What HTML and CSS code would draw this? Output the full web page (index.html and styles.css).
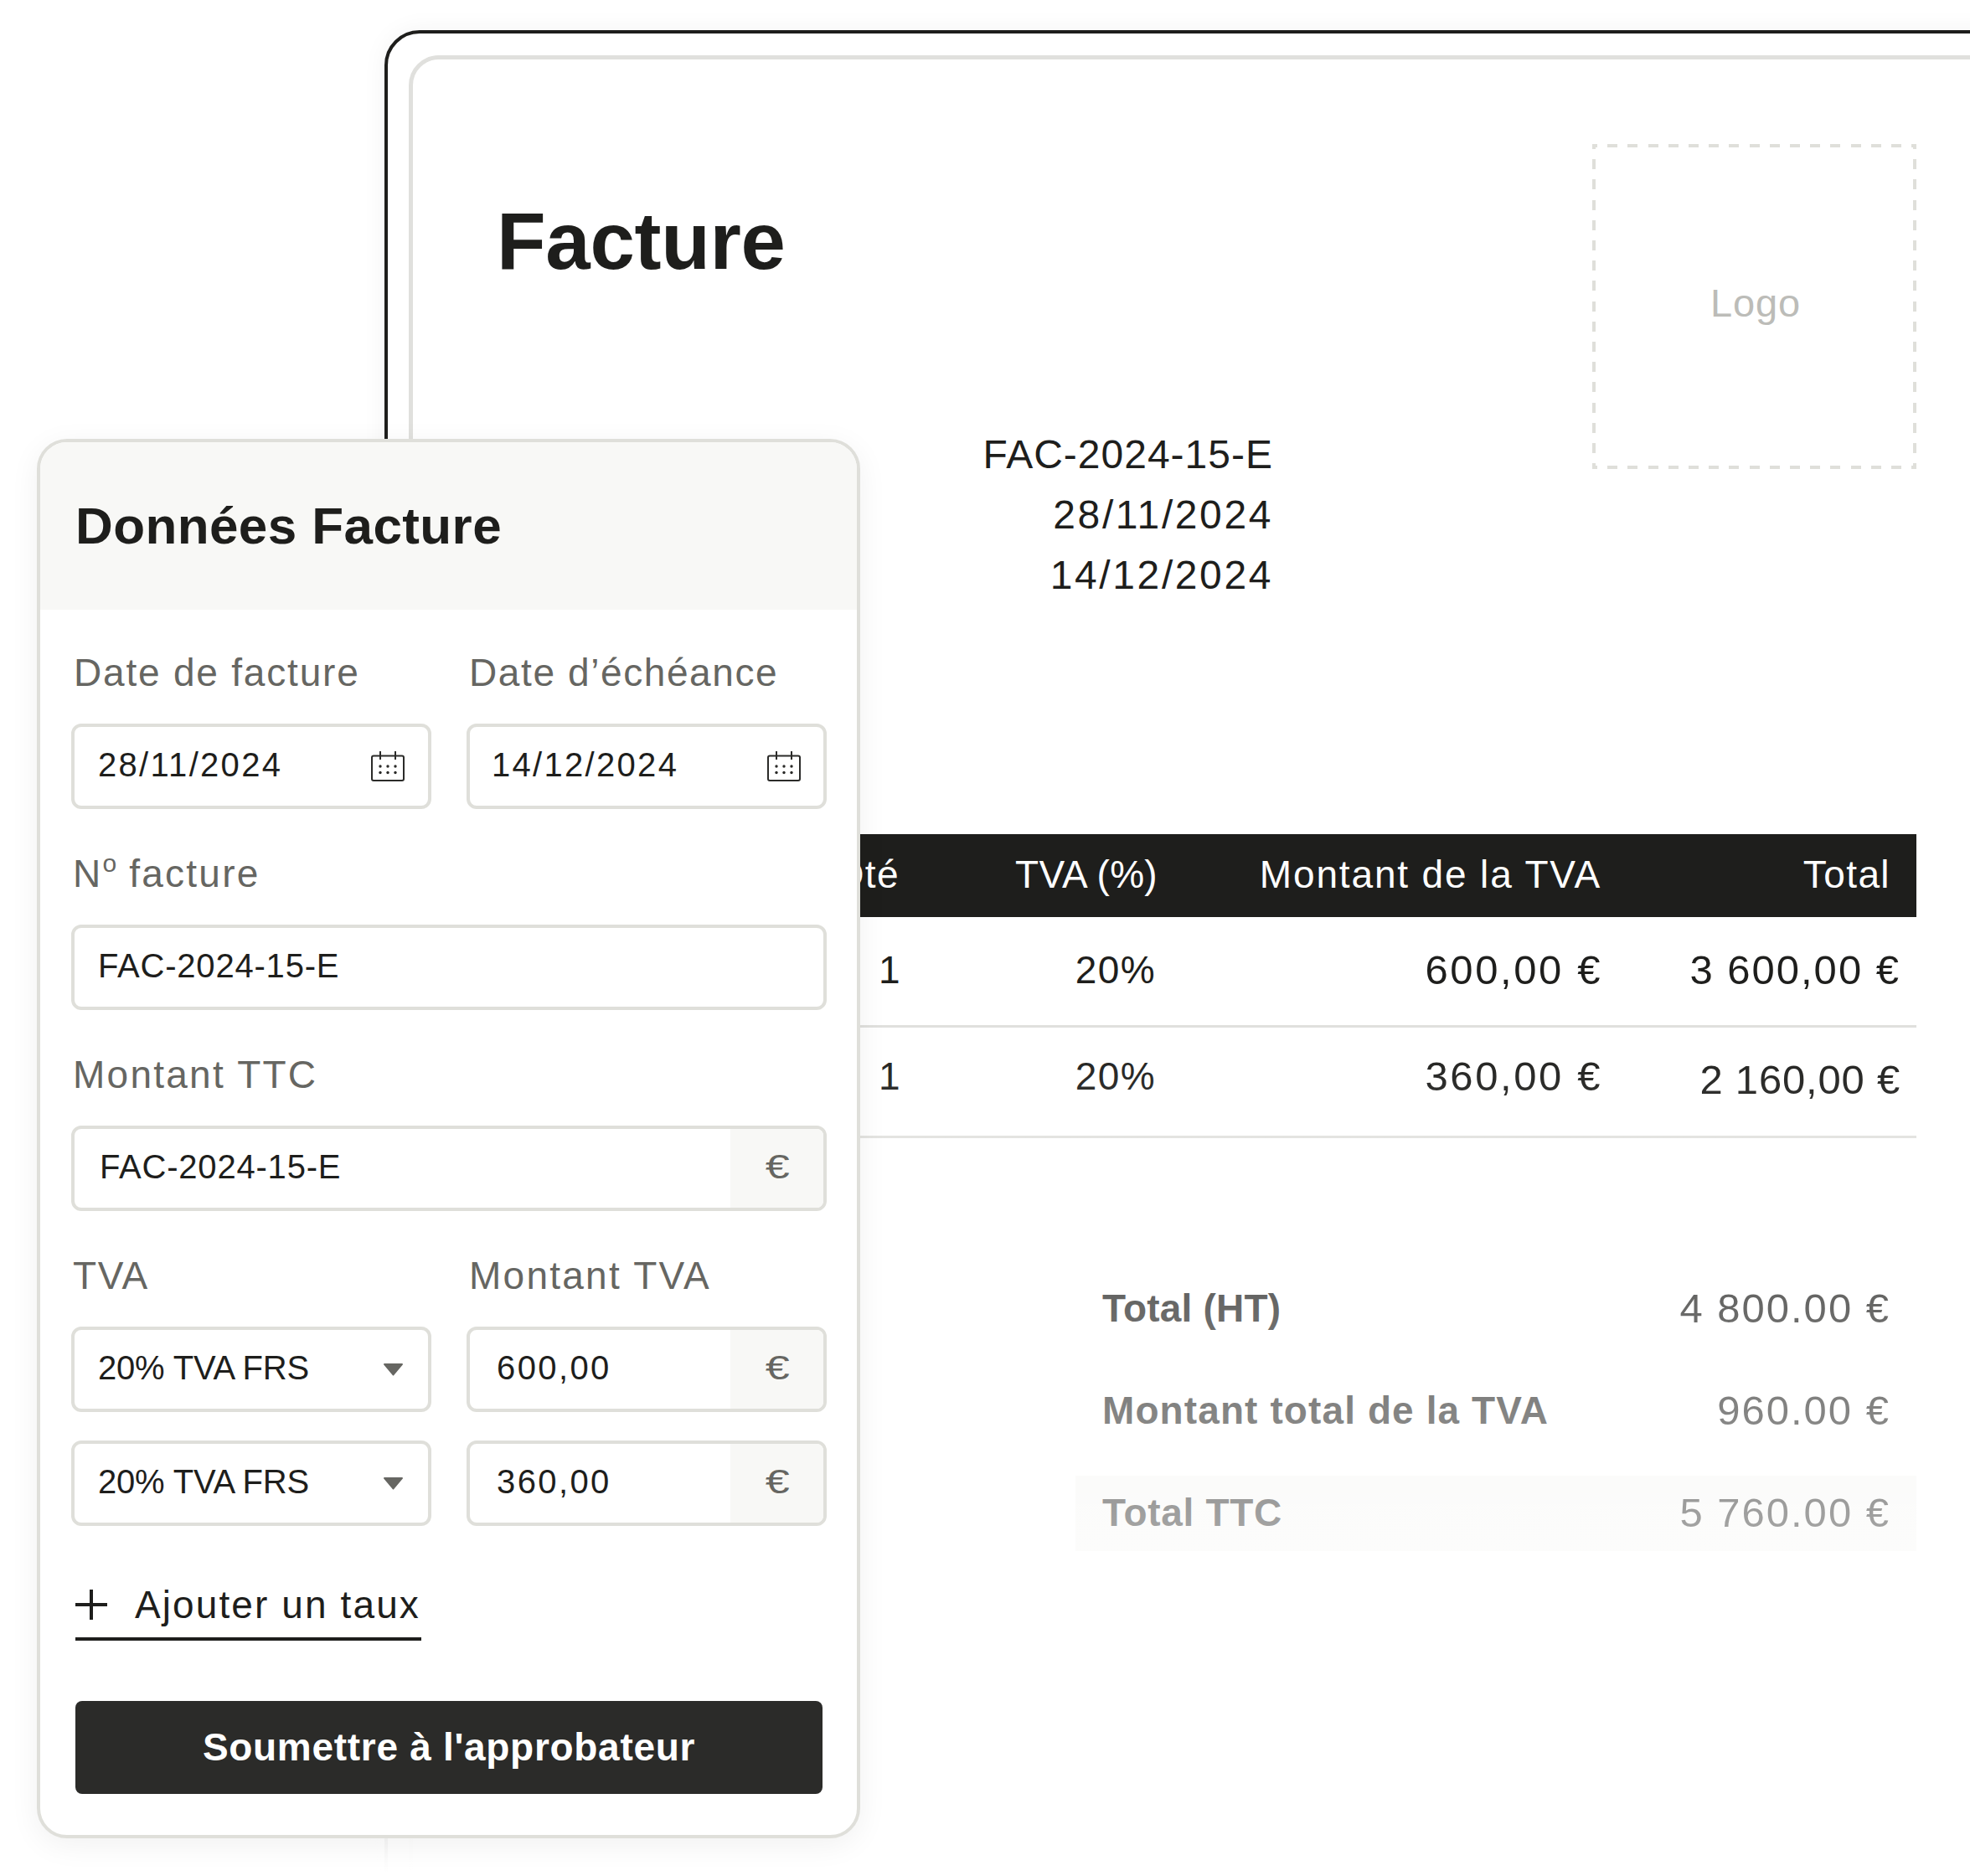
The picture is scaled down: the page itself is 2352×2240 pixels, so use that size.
FILE: index.html
```html
<!DOCTYPE html>
<html lang="fr">
<head>
<meta charset="utf-8">
<title>Facture</title>
<link rel="stylesheet" href="styles.css">
</head>
<body>
<div class="stage">
  <div class="frame">
    <div class="sheet">
      <header class="sheet-head">
        <div class="sheet-title">
          <h1 class="doc-title">Facture</h1>
          <div class="meta">
            <div class="meta-code">FAC-2024-15-E</div>
            <div>28/11/2024</div>
            <div>14/12/2024</div>
          </div>
        </div>
        <div class="logo-box">Logo</div>
      </header>

      <div class="table">
        <div class="thead">
          <span>Qté</span><span class="h-tva">TVA (%)</span><span class="h-amount">Montant de la TVA</span><span>Total</span>
        </div>
        <div class="trow">
          <span>1</span><span class="pct">20%</span><span class="money money-short">600,00 €</span><span class="money">3 600,00 €</span>
        </div>
        <div class="trow trow-second">
          <span>1</span><span class="pct">20%</span><span class="money money-short">360,00 €</span><span class="money low">2 160,00 €</span>
        </div>
      </div>

      <div class="totals">
        <div class="total-row"><strong>Total (HT)</strong><span class="money">4 800.00 €</span></div>
        <div class="total-row"><strong class="wide">Montant total de la TVA</strong><span class="money">960.00 €</span></div>
        <div class="total-row total-ttc"><strong class="mid">Total TTC</strong><span class="money">5 760.00 €</span></div>
      </div>
    </div>
  </div>

  <div class="fade"></div>

  <section class="card">
    <div class="card-head"><h2>Données Facture</h2></div>
    <div class="card-body">
      <div class="two">
        <div class="field">
          <label class="label label-date">Date de facture</label>
          <div class="input"><span class="value value-date">28/11/2024</span>
            <svg class="cal" viewBox="0 0 40 36" fill="none" stroke="#2b2b29" stroke-width="2"><rect x="1" y="5.5" width="38" height="29.5" rx="2"/><path d="M11 0v10M29 0v10"/><g fill="#2b2b29" stroke="none"><circle cx="11" cy="18" r="1.7"/><circle cx="20" cy="18" r="1.7"/><circle cx="29" cy="18" r="1.7"/><circle cx="11" cy="25.5" r="1.7"/><circle cx="20" cy="25.5" r="1.7"/><circle cx="29" cy="25.5" r="1.7"/></g></svg>
          </div>
        </div>
        <div class="field">
          <label class="label label-col2">Date d’échéance</label>
          <div class="input"><span class="value value-date value-date2">14/12/2024</span>
            <svg class="cal" viewBox="0 0 40 36" fill="none" stroke="#2b2b29" stroke-width="2"><rect x="1" y="5.5" width="38" height="29.5" rx="2"/><path d="M11 0v10M29 0v10"/><g fill="#2b2b29" stroke="none"><circle cx="11" cy="18" r="1.7"/><circle cx="20" cy="18" r="1.7"/><circle cx="29" cy="18" r="1.7"/><circle cx="11" cy="25.5" r="1.7"/><circle cx="20" cy="25.5" r="1.7"/><circle cx="29" cy="25.5" r="1.7"/></g></svg>
          </div>
        </div>
      </div>

      <div class="field">
        <label class="label label-wide">N<sup class="deg">o</sup> facture</label>
        <div class="input"><span class="value value-code">FAC-2024-15-E</span></div>
      </div>

      <div class="field">
        <label class="label label-wide">Montant TTC</label>
        <div class="input input-addon"><span class="value value-code">FAC-2024-15-E</span><span class="addon"><span class="euro">€</span></span></div>
      </div>

      <div class="two two-tight">
        <div class="field">
          <label class="label">TVA</label>
          <div class="input"><span class="value value-select">20% TVA FRS</span><svg class="caret" viewBox="0 0 25 16"><path d="M2 1h21a1 1 0 0 1 .8 1.6L13.3 15a1 1 0 0 1-1.6 0L1.2 2.6A1 1 0 0 1 2 1z" fill="#666662"/></svg></div>
        </div>
        <div class="field">
          <label class="label label-wide label-col2">Montant TVA</label>
          <div class="input input-addon"><span class="value value-num">600,00</span><span class="addon"><span class="euro">€</span></span></div>
        </div>
        <div class="input"><span class="value value-select">20% TVA FRS</span><svg class="caret" viewBox="0 0 25 16"><path d="M2 1h21a1 1 0 0 1 .8 1.6L13.3 15a1 1 0 0 1-1.6 0L1.2 2.6A1 1 0 0 1 2 1z" fill="#666662"/></svg></div>
        <div class="input input-addon"><span class="value value-num">360,00</span><span class="addon"><span class="euro">€</span></span></div>
      </div>

      <a class="add-link"><svg class="plus" viewBox="0 0 38 36" fill="none" stroke="#1e1e1c" stroke-width="4"><path d="M0 18h38M19 0v36"/></svg>Ajouter un taux</a>

      <button class="submit">Soumettre à l'approbateur</button>
    </div>
  </section>
</div>
</body>
</html>
```

FILE: styles.css
```css
* { box-sizing: border-box; }
html, body { margin: 0; padding: 0; background: #fff; }
body { font-family: "Liberation Sans", Arial, sans-serif; color: #1e1e1c; }

.stage { position: relative; width: 2352px; height: 2240px; overflow: hidden; padding-top: 36px; }

.frame {
  width: 1972px; margin-left: 459px; height: 2400px;
  border: 4px solid #1e1e1c; border-radius: 42px;
  padding: 26px 0 0 25px;
  box-shadow: 0 0 30px rgba(0,0,0,.05);
  background: #fff;
}
.sheet {
  height: 2300px; border: 5px solid #e0e0dd; border-radius: 36px;
  padding: 101px 134px 0 105px;
  background: #fff;
}

.sheet-head { display: flex; justify-content: space-between; align-items: flex-start; height: 824px; }
.sheet-title { width: 922px; }
.doc-title { margin: 56px 0 0 -5px; font-size: 96px; line-height: 120px; font-weight: 700; letter-spacing: -.3px; }
.meta { margin-top: 159px; text-align: right; font-size: 48px; line-height: 72px; letter-spacing: 2.6px; }
.meta-code { letter-spacing: 1px; }

.logo-box {
  width: 387px; height: 388px; display: flex; align-items: center; justify-content: center;
  color: #bcbcb8; font-size: 47px; letter-spacing: .8px; padding: 0 0 9px 3px;
  background:
    repeating-linear-gradient(90deg, #dfdfda 0 6px, transparent 6px 18.2px, #dfdfda 18.2px 24.2px) top left / 100% 4px no-repeat,
    repeating-linear-gradient(90deg, #dfdfda 0 6px, transparent 6px 18.2px, #dfdfda 18.2px 24.2px) bottom left / 100% 4px no-repeat,
    repeating-linear-gradient(180deg, #dfdfda 0 6px, transparent 6px 18.2px, #dfdfda 18.2px 24.2px) top left / 4px 100% no-repeat,
    repeating-linear-gradient(180deg, #dfdfda 0 6px, transparent 6px 18.2px, #dfdfda 18.2px 24.2px) top right / 4px 100% no-repeat;
}

.table { font-size: 46px; letter-spacing: 1.4px; }
.thead, .trow { display: grid; text-align: right; align-items: center; }
.thead {
  grid-template-columns: 476px 308px 530px 345px;
  height: 99px; padding-bottom: 4px; background: #1e1e1c; color: #fff;
}
.h-tva { letter-spacing: .3px; }
.h-amount { letter-spacing: 1.85px; }
.trow {
  grid-template-columns: 478px 304px 533px 356px;
  height: 129px; border-bottom: 3px solid #e0e0dd; box-sizing: content-box;
}
.trow span { position: relative; top: -2px; }
.trow-second span { top: -7px; }
.trow-second .low { top: -3px; letter-spacing: .8px; }
.thead span, .trow span { white-space: nowrap; }
.pct { letter-spacing: 1.4px; }
.money { font-size: 49px; letter-spacing: 2px; }
.money-short { letter-spacing: 2.6px; }

.totals { margin: 159px 0 0 auto; width: 1004px; display: flex; flex-direction: column; gap: 32px; font-size: 46px; letter-spacing: 1.4px; }
.total-row { height: 90px; display: flex; align-items: center; justify-content: space-between; padding: 0 31px 2px 32px; }
.total-row strong { letter-spacing: .2px; }
.total-row strong.wide { letter-spacing: 1.1px; }
.total-row strong.mid { letter-spacing: .7px; }
.total-ttc { background: #f7f7f5; }

.fade {
  position: absolute; left: 0; top: 0; width: 100%; height: 100%; pointer-events: none;
  background: linear-gradient(180deg, rgba(255,255,255,0) 1230px, #fff 2236px);
}

.card {
  position: absolute; left: 44px; top: 524px; width: 983px; height: 1671px;
  border: 4px solid #dfdfda; border-radius: 36px; background: #fff; overflow: hidden;
  box-shadow: 0 8px 36px rgba(0,0,0,.06);
}
.card-head { height: 200px; background: #f8f8f6; padding-left: 42px; display: flex; align-items: center; }
.card-head h2 { margin: 0; font-size: 62px; line-height: 80px; letter-spacing: .4px; font-weight: 700; }
.card-body { padding: 45px 36px 0 37px; }

.two { display: grid; grid-template-columns: 430px 430px; column-gap: 42px; }
.two-tight { row-gap: 34px; }
.field { margin-bottom: 47px; }
.two-tight .field { margin-bottom: 0; }
.label { display: block; height: 60px; line-height: 60px; margin: 0 0 31px 2px; font-size: 46px; color: #666662; letter-spacing: 1.6px; white-space: nowrap; }
.label-date { letter-spacing: 1.8px; margin-left: 3px; }
.label-wide { letter-spacing: 2.25px; }
.label-col2 { margin-left: 3px; }
.deg { font-size: 30px; line-height: 0; vertical-align: 18px; letter-spacing: 0; }

.input {
  height: 102px; border: 4px solid #dfdfda; border-radius: 12px; background: #fff;
  display: flex; align-items: center; justify-content: space-between; padding-left: 28px;
  font-size: 40px; letter-spacing: 1.7px; overflow: hidden;
}
.value { white-space: nowrap; padding-bottom: 4px; }
.value-date { letter-spacing: 2.3px; }
.value-date2 { margin-left: -2px; }
.value-code { letter-spacing: .8px; }
.value-select { letter-spacing: -.2px; }
.value-num { letter-spacing: 2.4px; padding-left: 4px; }
.input-addon .value-code { padding-left: 2px; }
.cal { width: 40px; height: 36px; margin-right: 27px; flex: none; }
.two > .field:first-child .cal { margin-right: 28px; }
.caret { width: 25px; height: 16px; margin-right: 29px; flex: none; }
.addon { width: 111px; height: 100%; background: #f8f8f6; color: #666662; display: flex; align-items: center; justify-content: center; letter-spacing: 0; flex: none; padding-bottom: 4px; padding-left: 2px; }
.euro { display: inline-block; transform: scaleX(1.3); }

.add-link {
  display: flex; align-items: center; width: 413px; height: 96px; margin: 41px 0 0 5px;
  border-bottom: 4px solid #1e1e1c; font-size: 46px; letter-spacing: 2.1px; white-space: nowrap; padding-top: 13px;
}
.plus { width: 38px; height: 36px; margin-right: 33px; flex: none; }

.submit {
  display: block; width: 892px; height: 111px; margin: 72px 0 0 5px; border: 0; border-radius: 8px; padding: 0 0 2px;
  background: #2b2b29; color: #fff; font: 700 46px "Liberation Sans", Arial, sans-serif; letter-spacing: .7px;
}
```
